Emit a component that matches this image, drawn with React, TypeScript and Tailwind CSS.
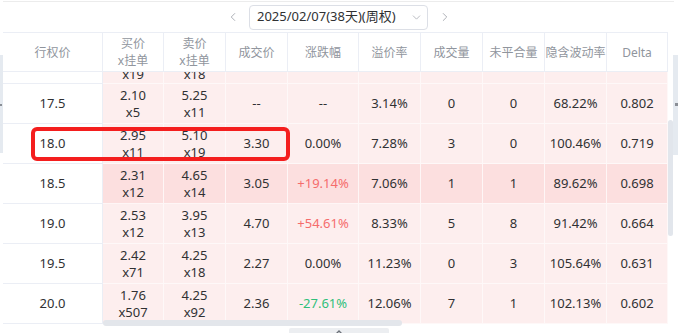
import { ChevronLeft, ChevronRight, ChevronDown } from "lucide-react";

type Row = {
  strike: string;
  bid: [string, string];
  ask: [string, string];
  last: string;
  change: string;
  changeTone?: "up" | "down";
  premium: string;
  volume: string;
  openInt: string;
  iv: string;
  delta: string;
  strong?: boolean;
};

const GRID = "grid grid-cols-[100px_61px_62px_62px_71px_62px_62px_62px_62px_61px]";

const rows: Row[] = [
  { strike: "17.5", bid: ["2.10", "x5"], ask: ["5.25", "x11"], last: "--", change: "--", premium: "3.14%", volume: "0", openInt: "0", iv: "68.22%", delta: "0.802" },
  { strike: "18.0", bid: ["2.95", "x11"], ask: ["5.10", "x19"], last: "3.30", change: "0.00%", premium: "7.28%", volume: "3", openInt: "0", iv: "100.46%", delta: "0.719" },
  { strike: "18.5", bid: ["2.31", "x12"], ask: ["4.65", "x14"], last: "3.05", change: "+19.14%", changeTone: "up", premium: "7.06%", volume: "1", openInt: "1", iv: "89.62%", delta: "0.698", strong: true },
  { strike: "19.0", bid: ["2.53", "x12"], ask: ["3.95", "x13"], last: "4.70", change: "+54.61%", changeTone: "up", premium: "8.33%", volume: "5", openInt: "8", iv: "91.42%", delta: "0.664" },
  { strike: "19.5", bid: ["2.42", "x71"], ask: ["4.25", "x18"], last: "2.27", change: "0.00%", premium: "11.23%", volume: "0", openInt: "3", iv: "105.64%", delta: "0.631" },
  { strike: "20.0", bid: ["1.76", "x507"], ask: ["4.25", "x92"], last: "2.36", change: "-27.61%", changeTone: "down", premium: "12.06%", volume: "7", openInt: "1", iv: "102.13%", delta: "0.602" },
];

function Cell({ children, strong, first }: { children?: React.ReactNode; strong?: boolean; first?: boolean }) {
  const bg = first
    ? "bg-white border-[#ebeef5]"
    : strong
    ? "bg-[#fcdfdf] border-white/70"
    : "bg-[#fdeeee] border-white/60";
  return (
    <div className={`flex flex-col items-center justify-center border-r border-b leading-[17px] ${bg}`}>{children}</div>
  );
}

function DataRow({ row }: { row: Row }) {
  const tone = row.changeTone === "up" ? "text-[#f56c6c]" : row.changeTone === "down" ? "text-[#2fbf7a]" : "";
  return (
    <div className={`${GRID} h-[40px]`}>
      <Cell first>{row.strike}</Cell>
      <Cell strong={row.strong}>
        <span>{row.bid[0]}</span>
        <span>{row.bid[1]}</span>
      </Cell>
      <Cell strong={row.strong}>
        <span>{row.ask[0]}</span>
        <span>{row.ask[1]}</span>
      </Cell>
      <Cell strong={row.strong}>{row.last}</Cell>
      <Cell strong={row.strong}>
        <span className={tone}>{row.change}</span>
      </Cell>
      <Cell strong={row.strong}>{row.premium}</Cell>
      <Cell strong={row.strong}>{row.volume}</Cell>
      <Cell strong={row.strong}>{row.openInt}</Cell>
      <Cell strong={row.strong}>{row.iv}</Cell>
      <Cell strong={row.strong}>{row.delta}</Cell>
    </div>
  );
}

// tail of the row scrolled up under the header: only the lower line peeks out
function PeekRow() {
  return (
    <div className={`${GRID} h-[12px]`}>
      <Cell first />
      <Cell>
        <span className="-mt-[6px]">x19</span>
      </Cell>
      <Cell>
        <span className="-mt-[6px]">x18</span>
      </Cell>
      <Cell />
      <Cell />
      <Cell />
      <Cell />
      <Cell />
      <Cell />
      <Cell />
    </div>
  );
}

const headers: string[][] = [
  ["行权价"],
  ["买价", "x挂单"],
  ["卖价", "x挂单"],
  ["成交价"],
  ["涨跌幅"],
  ["溢价率"],
  ["成交量"],
  ["未平合量"],
  ["隐含波动率"],
  ["Delta"],
];

export default function App() {
  return (
    <div className="relative h-[333px] w-[678px] overflow-hidden bg-white font-['Noto_Sans','Noto_Sans_CJK_SC',sans-serif] text-[13px] text-[#303133]">
      <div className="pl-[3px] pt-px">
        <div className="h-px w-[671px] bg-[#ececec]" />
      </div>

      {/* expiry picker */}
      <div className="flex h-[30px] items-center pl-[226px]">
        <ChevronLeft size={14} strokeWidth={1.6} className="text-[#a8abb2]" />
        <div className="ml-[9px] flex h-[25px] w-[179px] items-center justify-between rounded-[4px] border border-[#dcdfe6] pl-[7px] pr-[4px]">
          <span>2025/02/07(38天)(周权)</span>
          <ChevronDown size={13} strokeWidth={1.6} className="text-[#b0b3b9]" />
        </div>
        <ChevronRight size={14} strokeWidth={1.6} className="ml-[10px] text-[#a8abb2]" />
      </div>

      {/* table */}
      <div className="ml-[3px] w-[665px]">
        <div className={`${GRID} relative z-10 h-[40px] border-y border-[#ebeef5] bg-white text-[12px] text-[#90959d]`}>
          {headers.map((h, i) => (
            <div key={i} className="flex flex-col items-center justify-center border-r border-[#ebeef5] leading-[17px]">
              {h.map((t) => (
                <span key={t}>{t}</span>
              ))}
            </div>
          ))}
        </div>
        <div className="h-[12px] overflow-hidden">
          <PeekRow />
        </div>
        {rows.map((r) => (
          <DataRow key={r.strike} row={r} />
        ))}
      </div>

      {/* highlight box */}
      <div className="absolute left-[31px] top-[127px] h-[34px] w-[259px] rounded-[6px] border-[4px] border-[#f41e1e]" />

      {/* side panels & scrollbars */}
      <div className="absolute left-0 top-[55px] h-[98px] w-[3px] bg-[#e5eaf0]" />
      <div className="absolute left-0 top-[104px] h-[2px] w-[2px] bg-[#8a8f96]" />
      <div className="absolute left-[673px] top-[55px] h-[100px] w-[5px] bg-[#e5eaf0]" />
      <div className="absolute left-[675px] top-[103px] h-[3px] w-[3px] bg-[#8a8f96]" />
      <div className="absolute left-[668px] top-[120px] h-[116px] w-[5px] rounded-[3px] bg-[#e2e6ec]" />
      <div className="absolute left-[103px] top-[320px] h-[6px] w-[299px] rounded-[3px] bg-[#e3e6eb]" />
      <div className="absolute left-[289px] top-[328px] flex h-[8px] w-[100px] justify-center rounded-t-[2px] bg-[#eceef1] pt-[2px]">
        <svg width="8" height="5" viewBox="0 0 8 5">
          <path d="M0.5 4.5 L4 1 L7.5 4.5" fill="none" stroke="#6b7078" strokeWidth="1.4" />
        </svg>
      </div>
    </div>
  );
}
